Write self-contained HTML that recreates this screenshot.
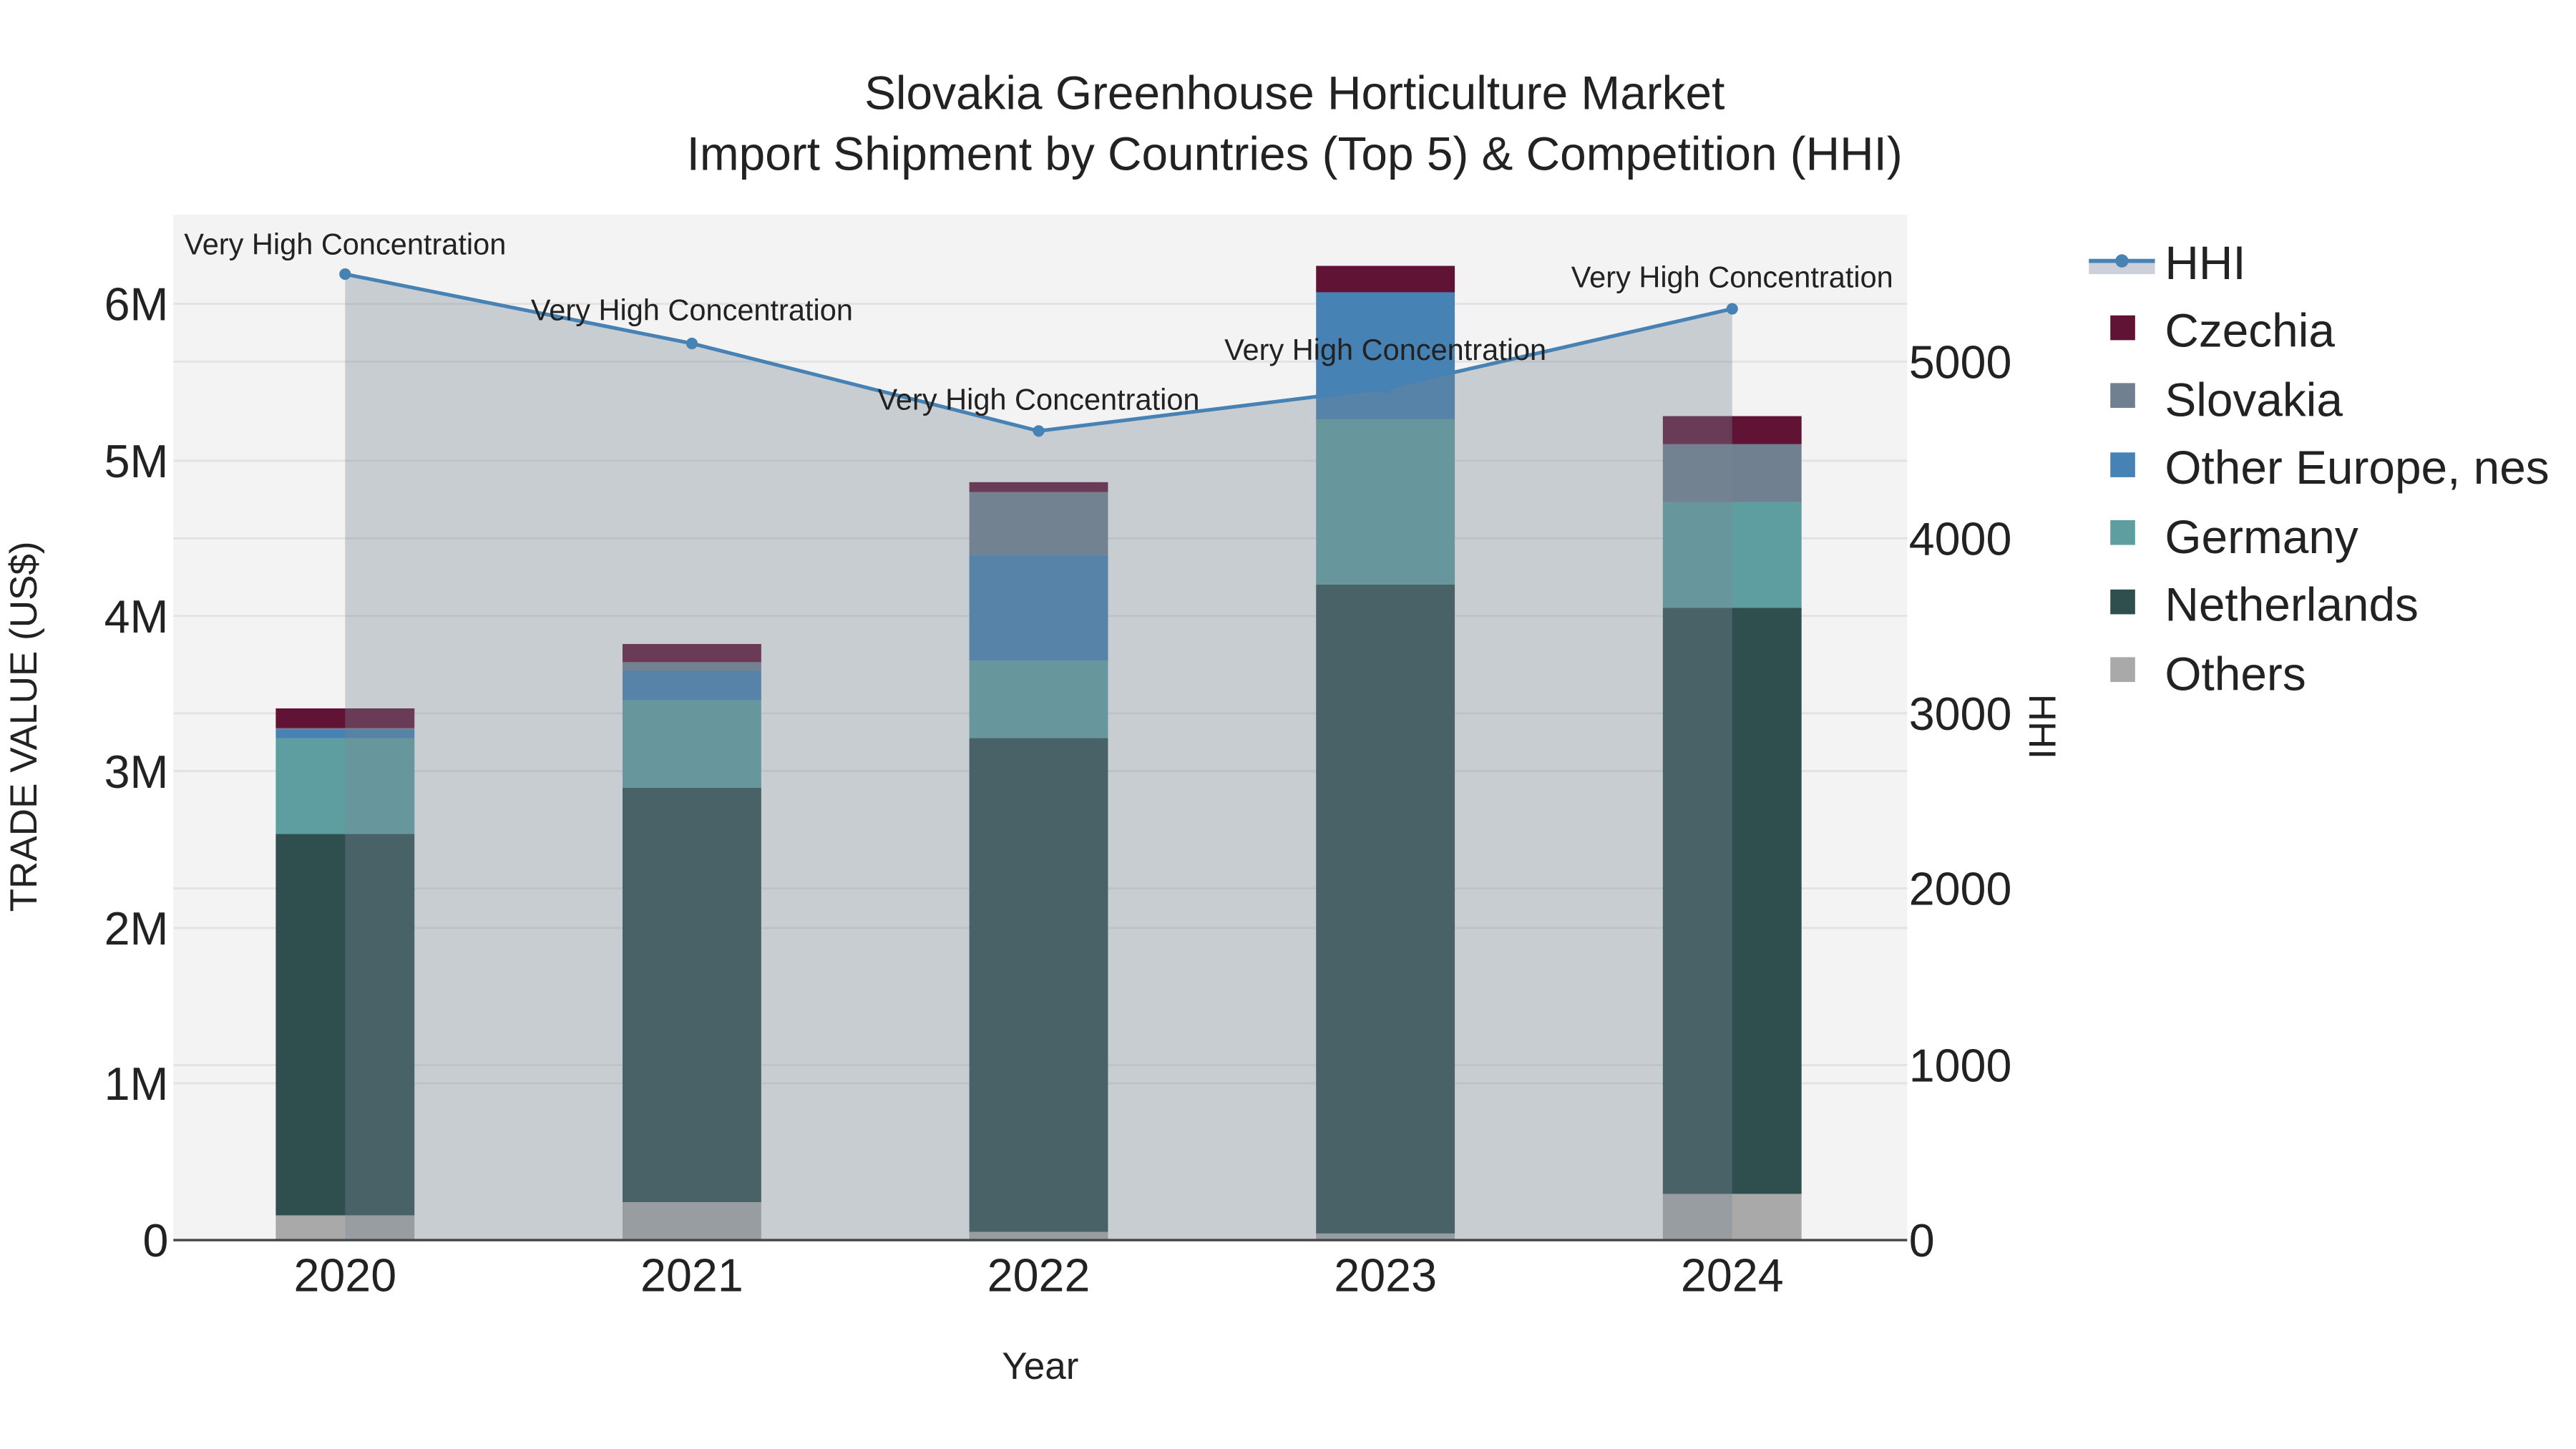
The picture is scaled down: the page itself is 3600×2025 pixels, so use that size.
<!DOCTYPE html>
<html><head><meta charset="utf-8"><style>
html,body{margin:0;padding:0;background:#fff;width:3600px;height:2025px;overflow:hidden}
svg{display:block}
text{font-family:"Liberation Sans",sans-serif;fill:#222}
</style></head><body>
<svg width="3600" height="2025" viewBox="0 0 1560 877.5" xmlns="http://www.w3.org/2000/svg">
<rect x="0" y="0" width="1560" height="877.5" fill="#fff"/>
<rect x="105" y="130" width="1050" height="621" fill="#f3f3f3"/>
<g stroke="#e2e2e2" stroke-width="1.2">
<line x1="105" x2="1155" y1="656" y2="656"/><line x1="105" x2="1155" y1="562" y2="562"/>
<line x1="105" x2="1155" y1="467" y2="467"/><line x1="105" x2="1155" y1="373" y2="373"/>
<line x1="105" x2="1155" y1="279" y2="279"/><line x1="105" x2="1155" y1="184" y2="184"/>
<line x1="105" x2="1155" y1="645" y2="645"/><line x1="105" x2="1155" y1="538" y2="538"/>
<line x1="105" x2="1155" y1="432" y2="432"/><line x1="105" x2="1155" y1="326" y2="326"/>
<line x1="105" x2="1155" y1="219" y2="219"/>
</g>
<g>
<rect x="167" y="736" width="84" height="15" fill="#a9a9a9"/>
<rect x="167" y="505" width="84" height="231" fill="#2f4f4f"/>
<rect x="167" y="447" width="84" height="58" fill="#5f9ea0"/>
<rect x="167" y="442" width="84" height="5" fill="#4682b4"/>
<rect x="167" y="441" width="84" height="1" fill="#708090"/>
<rect x="167" y="429" width="84" height="12" fill="#611335"/>
<rect x="377" y="728" width="84" height="23" fill="#a9a9a9"/>
<rect x="377" y="477" width="84" height="251" fill="#2f4f4f"/>
<rect x="377" y="424" width="84" height="53" fill="#5f9ea0"/>
<rect x="377" y="406" width="84" height="18" fill="#4682b4"/>
<rect x="377" y="401" width="84" height="5" fill="#708090"/>
<rect x="377" y="390" width="84" height="11" fill="#611335"/>
<rect x="587" y="746" width="84" height="5" fill="#a9a9a9"/>
<rect x="587" y="447" width="84" height="299" fill="#2f4f4f"/>
<rect x="587" y="400" width="84" height="47" fill="#5f9ea0"/>
<rect x="587" y="336" width="84" height="64" fill="#4682b4"/>
<rect x="587" y="298" width="84" height="38" fill="#708090"/>
<rect x="587" y="292" width="84" height="6" fill="#611335"/>
<rect x="797" y="747" width="84" height="4" fill="#a9a9a9"/>
<rect x="797" y="354" width="84" height="393" fill="#2f4f4f"/>
<rect x="797" y="254" width="84" height="100" fill="#5f9ea0"/>
<rect x="797" y="177" width="84" height="77" fill="#4682b4"/>
<rect x="797" y="161" width="84" height="16" fill="#611335"/>
<rect x="1007" y="723" width="84" height="28" fill="#a9a9a9"/>
<rect x="1007" y="368" width="84" height="355" fill="#2f4f4f"/>
<rect x="1007" y="304" width="84" height="64" fill="#5f9ea0"/>
<rect x="1007" y="269" width="84" height="35" fill="#708090"/>
<rect x="1007" y="252" width="84" height="17" fill="#611335"/>
</g>
<polygon points="209,751 209,166 419,208 629,261 839,235 1049,187 1049,751" fill="rgb(119,134,150)" fill-opacity="0.35"/>
<polyline points="209,166 419,208 629,261 839,235 1049,187" fill="none" stroke="#4682b4" stroke-width="2.2"/>
<g fill="#4682b4"><circle cx="209" cy="166" r="3.5"/><circle cx="419" cy="208" r="3.5"/><circle cx="629" cy="261" r="3.5"/><circle cx="839" cy="235" r="3.5"/><circle cx="1049" cy="187" r="3.5"/></g>
<line x1="105" x2="1155" y1="751" y2="751" stroke="#444" stroke-width="1.5"/>
<g font-size="18" text-anchor="middle">
<text x="209" y="154">Very High Concentration</text>
<text x="419" y="194">Very High Concentration</text>
<text x="629" y="248">Very High Concentration</text>
<text x="839" y="218">Very High Concentration</text>
<text x="1049" y="174">Very High Concentration</text>
</g>
<g font-size="28.5" text-anchor="middle">
<text x="784" y="66">Slovakia Greenhouse Horticulture Market</text>
<text x="784" y="103">Import Shipment by Countries (Top 5) &amp; Competition (HHI)</text>
</g>
<g font-size="28" text-anchor="end">
<text x="102" y="761">0</text><text x="102" y="666">1M</text><text x="102" y="572">2M</text>
<text x="102" y="477">3M</text><text x="102" y="383">4M</text><text x="102" y="289">5M</text><text x="102" y="194">6M</text>
</g>
<g font-size="28" text-anchor="start">
<text x="1156" y="761">0</text><text x="1156" y="655">1000</text><text x="1156" y="548">2000</text>
<text x="1156" y="442">3000</text><text x="1156" y="336">4000</text><text x="1156" y="229">5000</text>
</g>
<g font-size="28" text-anchor="middle">
<text x="209" y="782">2020</text><text x="419" y="782">2021</text><text x="629" y="782">2022</text>
<text x="839" y="782">2023</text><text x="1049" y="782">2024</text>
</g>
<text x="630" y="835" font-size="23" text-anchor="middle">Year</text>
<text transform="translate(22,440) rotate(-90)" font-size="23" text-anchor="middle">TRADE VALUE (US$)</text>
<text transform="translate(1229,440) rotate(90)" font-size="23" text-anchor="middle">HHI</text>
<rect x="1265" y="158" width="40" height="8" fill="#ccd1d9"/>
<line x1="1265" x2="1305" y1="158" y2="158" stroke="#4682b4" stroke-width="2.5"/>
<circle cx="1285" cy="158" r="4" fill="#4682b4"/>
<g font-size="28.5">
<text x="1311" y="169">HHI</text>
<text x="1311" y="210">Czechia</text>
<text x="1311" y="252">Slovakia</text>
<text x="1311" y="293">Other Europe, nes</text>
<text x="1311" y="335">Germany</text>
<text x="1311" y="376">Netherlands</text>
<text x="1311" y="418">Others</text>
</g>
<rect x="1278" y="191" width="15" height="15" fill="#611335"/>
<rect x="1278" y="232" width="15" height="15" fill="#708090"/>
<rect x="1278" y="274" width="15" height="15" fill="#4682b4"/>
<rect x="1278" y="315" width="15" height="15" fill="#5f9ea0"/>
<rect x="1278" y="357" width="15" height="15" fill="#2f4f4f"/>
<rect x="1278" y="398" width="15" height="15" fill="#a9a9a9"/>
</svg>
</body></html>
